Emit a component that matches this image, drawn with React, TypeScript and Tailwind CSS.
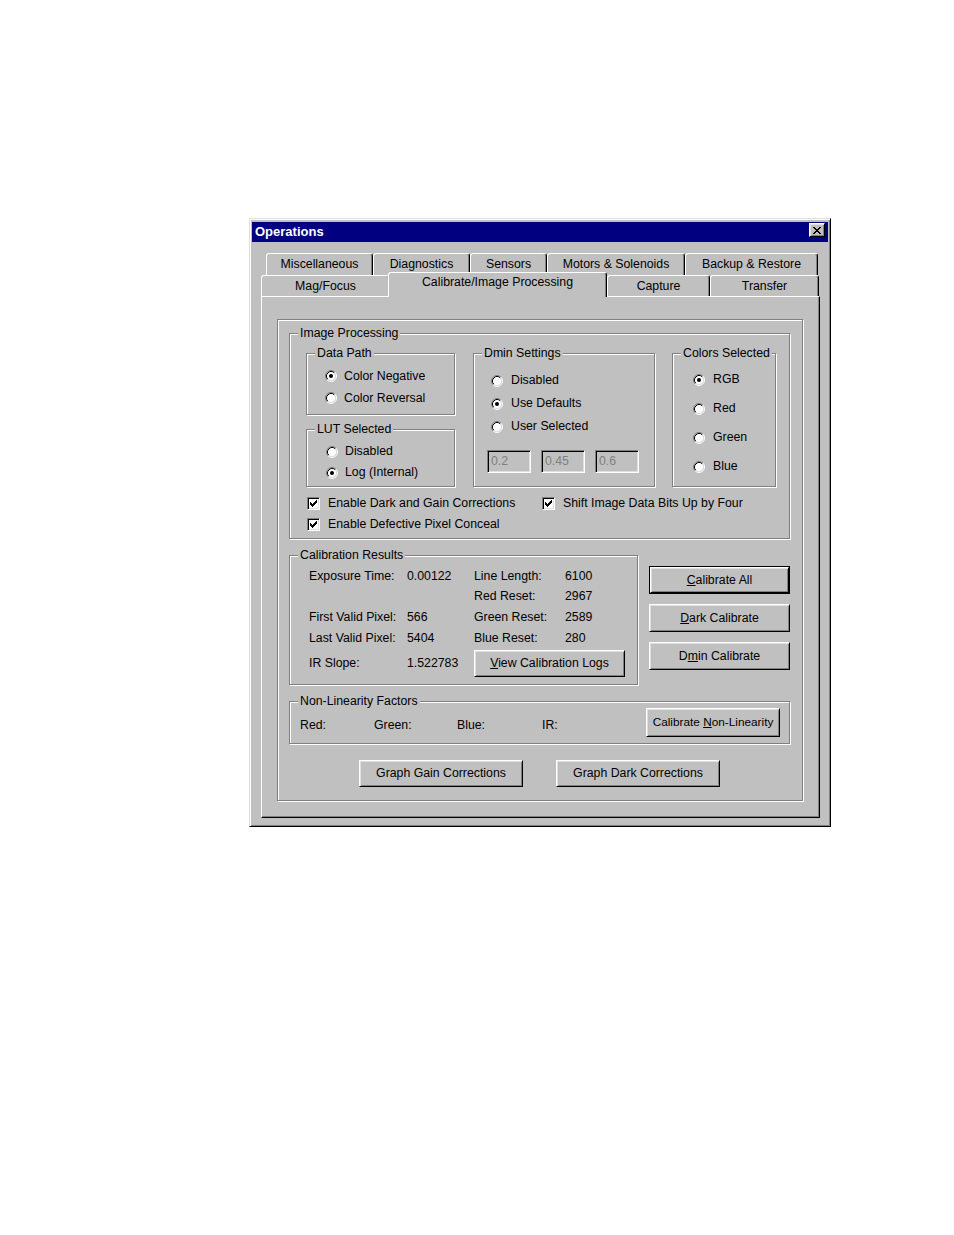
import React from "react";

const FONT = "font-['Liberation_Sans',Arial,sans-serif]";

// win95 bevels
const RAISED =
  "border border-t-white border-l-white border-r-black border-b-black shadow-[inset_1px_1px_0_#dfdfdf,inset_-1px_-1px_0_#808080]";
const SUNKEN =
  "border border-t-[#808080] border-l-[#808080] border-r-white border-b-white shadow-[inset_1px_1px_0_#000,inset_-1px_-1px_0_#dfdfdf]";
const ETCHED = "border border-[#808080] shadow-[inset_1px_1px_0_#fff,1px_1px_0_#fff]";

const TAB =
  "flex shrink-0 justify-center rounded-t-[3px] border-x border-t border-t-white border-l-white border-r-black shadow-[inset_-1px_0_0_#808080]";

const Group: React.FC<{ label: string; className?: string; children?: React.ReactNode }> = ({
  label,
  className,
  children,
}) => (
  <div className={`${ETCHED} shrink-0 ${className ?? ""}`}>
    <div className="-mt-[8px] ml-[8px] w-fit bg-[#c0c0c0] px-[2px] leading-[15px]">{label}</div>
    {children}
  </div>
);

const Radio: React.FC<{ label: string; checked?: boolean; row: string; gap?: string }> = ({
  label,
  checked,
  row,
  gap = "gap-[7px]",
}) => (
  <div className={`flex items-center ${row} ${gap}`}>
    <svg width="12" height="12" viewBox="0 0 12 12" className="shrink-0">
      <circle cx="6" cy="6" r="4.5" fill="#fff" />
      <path d="M2.11 9.89A5.5 5.5 0 0 1 9.89 2.11" fill="none" stroke="#808080" />
      <path d="M9.89 2.11A5.5 5.5 0 0 1 2.11 9.89" fill="none" stroke="#fff" />
      <path d="M2.82 9.18A4.5 4.5 0 0 1 9.18 2.82" fill="none" stroke="#000" />
      <path d="M9.18 2.82A4.5 4.5 0 0 1 2.82 9.18" fill="none" stroke="#dfdfdf" />
      {checked && <circle cx="6" cy="6" r="2" fill="#000" />}
    </svg>
    <span>{label}</span>
  </div>
);

const Check: React.FC<{ label: string }> = ({ label }) => (
  <div className="flex h-[21px] items-center gap-[8px]">
    <div className={`${SUNKEN} flex h-[13px] w-[13px] shrink-0 items-center justify-center bg-white`}>
      <svg width="7" height="7" viewBox="0 0 7 7" shapeRendering="crispEdges">
        <polygon
          fill="#000"
          points="0,2 1,2 1,3 2,3 2,4 3,4 3,3 4,3 4,2 5,2 5,1 6,1 6,0 7,0 7,3 6,3 6,4 5,4 5,5 4,5 4,6 3,6 3,7 2,7 2,6 1,6 1,5 0,5"
        />
      </svg>
    </div>
    <span>{label}</span>
  </div>
);

const Btn: React.FC<{ className: string; children: React.ReactNode; isDefault?: boolean }> = ({
  className,
  children,
  isDefault,
}) =>
  isDefault ? (
    <div className={`border border-black ${className}`}>
      <div className={`${RAISED} flex h-full w-full items-center justify-center`}>{children}</div>
    </div>
  ) : (
    <div className={`${RAISED} flex items-center justify-center ${className}`}>{children}</div>
  );

const Field: React.FC<{ value: string }> = ({ value }) => (
  <div className={`${SUNKEN} flex h-[23px] w-[44px] items-center pl-[3px] text-[#808080]`}>{value}</div>
);

const U: React.FC<{ children: React.ReactNode }> = ({ children }) => (
  <span className="underline underline-offset-1">{children}</span>
);

const backRow = [
  { label: "Miscellaneous", w: "w-[107px]" },
  { label: "Diagnostics", w: "w-[97px]" },
  { label: "Sensors", w: "w-[77px]" },
  { label: "Motors & Solenoids", w: "w-[138px]" },
  { label: "Backup & Restore", w: "w-[133px]" },
];

const results = [
  ["Exposure Time:", "0.00122", "Line Length:", "6100"],
  ["", "", "Red Reset:", "2967"],
  ["First Valid Pixel:", "566", "Green Reset:", "2589"],
  ["Last Valid Pixel:", "5404", "Blue Reset:", "280"],
];

export default function App() {
  return (
    <div className={`${FONT} min-h-screen bg-white pl-[249px] pt-[218px] text-[12.3px] leading-[15px] text-black`}>
      <div className="flex h-[609px] w-[582px] flex-col border border-t-[#dfdfdf] border-l-[#dfdfdf] border-r-black border-b-black bg-[#c0c0c0] px-[2px] pt-[3px] shadow-[inset_1px_1px_0_#fff,inset_-1px_-1px_0_#808080]">
        {/* title bar */}
        <div className="flex h-[20px] shrink-0 items-start justify-between bg-[#000080] pl-[3px] pr-[3px] pt-[1px]">
          <span className="text-[13px] font-bold leading-[17px] text-white">Operations</span>
          <div className={`${RAISED} flex h-[14px] w-[16px] items-center justify-center bg-[#c0c0c0]`}>
            <svg width="8" height="7" viewBox="0 0 8 7" shapeRendering="crispEdges">
              <path
                fill="#000"
                d="M0 0h2v1H0zM6 0h2v1H6zM1 1h2v1H1zM5 1h2v1H5zM2 2h4v1H2zM3 3h2v1H3zM2 4h4v1H2zM1 5h2v1H1zM5 5h2v1H5zM0 6h2v1H0zM6 6h2v1H6z"
              />
            </svg>
          </div>
        </div>

        {/* tab control */}
        <div className="ml-[9px] mt-[11px] w-[559px]">
          <div className="flex h-[22px] pl-[5px]">
            {backRow.map((t) => (
              <div key={t.label} className={`${TAB} h-[22px] items-center ${t.w}`}>
                {t.label}
              </div>
            ))}
          </div>
          <div className="flex h-[21px] items-end">
            <div className={`${TAB} h-[21px] w-[129px] items-center`}>Mag/Focus</div>
            <div className={`${TAB} relative z-10 -mb-px -ml-[2px] h-[25px] w-[219px] bg-[#c0c0c0] pt-[2px]`}>
              Calibrate/Image Processing
            </div>
            <div className={`${TAB} h-[21px] w-[103px] items-center`}>Capture</div>
            <div className={`${TAB} h-[21px] w-[109px] items-center`}>Transfer</div>
          </div>

          {/* page */}
          <div className="h-[522px] w-[559px] border border-t-white border-l-white border-r-black border-b-black pl-[15px] pt-[22px] shadow-[inset_-1px_-1px_0_#808080]">
            <div className={`${ETCHED} h-[482px] w-[526px] pl-[11px] pt-[13px]`}>
              {/* Image Processing */}
              <Group label="Image Processing" className="h-[206px] w-[501px]">
                <div className="flex pl-[16px] pt-[12px]">
                  <div className="flex flex-col gap-[14px]">
                    <Group label="Data Path" className="h-[62px] w-[149px]">
                      <div className="mt-[4px] pl-[18px]">
                        <Radio label="Color Negative" checked row="h-[22px]" />
                        <Radio label="Color Reversal" row="h-[22px]" />
                      </div>
                    </Group>
                    <Group label="LUT Selected" className="h-[58px] w-[149px]">
                      <div className="mt-[4px] pl-[19px]">
                        <Radio label="Disabled" row="h-[21px]" />
                        <Radio label="Log (Internal)" checked row="h-[21px]" />
                      </div>
                    </Group>
                  </div>
                  <Group label="Dmin Settings" className="ml-[18px] h-[134px] w-[182px]">
                    <div className="mt-[8px] pl-[17px]">
                      <Radio label="Disabled" row="h-[23px]" gap="gap-[8px]" />
                      <Radio label="Use Defaults" checked row="h-[23px]" gap="gap-[8px]" />
                      <Radio label="User Selected" row="h-[23px]" gap="gap-[8px]" />
                    </div>
                    <div className="ml-[13px] mt-[12px] flex gap-[10px]">
                      <Field value="0.2" />
                      <Field value="0.45" />
                      <Field value="0.6" />
                    </div>
                  </Group>
                  <Group label="Colors Selected" className="ml-[17px] h-[134px] w-[104px]">
                    <div className="mt-[4px] pl-[20px]">
                      <Radio label="RGB" checked row="h-[29px]" gap="gap-[8px]" />
                      <Radio label="Red" row="h-[29px]" gap="gap-[8px]" />
                      <Radio label="Green" row="h-[29px]" gap="gap-[8px]" />
                      <Radio label="Blue" row="h-[29px]" gap="gap-[8px]" />
                    </div>
                  </Group>
                </div>
                <div className="mt-[6px] grid grid-cols-[235px_1fr] pl-[17px]">
                  <Check label="Enable Dark and Gain Corrections" />
                  <Check label="Shift Image Data Bits Up by Four" />
                  <Check label="Enable Defective Pixel Conceal" />
                </div>
              </Group>

              {/* calibration results + buttons */}
              <div className="mt-[16px] flex">
                <Group label="Calibration Results" className="h-[130px] w-[349px]">
                  <div className="mt-[3px] grid grid-cols-[98px_67px_91px_auto] grid-rows-[20px_21px_21px_21px_29px] items-center pl-[19px]">
                    {results.flat().map((c, i) => (
                      <span key={i}>{c}</span>
                    ))}
                    <span>IR Slope:</span>
                    <span>1.522783</span>
                    <Btn className="col-span-2 h-[27px] w-[151px]">
                      <span>
                        <U>V</U>iew Calibration Logs
                      </span>
                    </Btn>
                  </div>
                </Group>
                <div className="ml-[11px] mt-[11px] flex flex-col gap-[10px]">
                  <Btn isDefault className="h-[28px] w-[141px]">
                    <span>
                      <U>C</U>alibrate All
                    </span>
                  </Btn>
                  <Btn className="h-[28px] w-[141px]">
                    <span>
                      <U>D</U>ark Calibrate
                    </span>
                  </Btn>
                  <Btn className="h-[28px] w-[141px]">
                    <span>
                      D<U>m</U>in Calibrate
                    </span>
                  </Btn>
                </div>
              </div>

              {/* non-linearity */}
              <Group label="Non-Linearity Factors" className="mt-[16px] h-[43px] w-[501px]">
                <div className="flex items-start pl-[10px]">
                  <span className="mt-[9px] w-[74px]">Red:</span>
                  <span className="mt-[9px] w-[83px]">Green:</span>
                  <span className="mt-[9px] w-[85px]">Blue:</span>
                  <span className="mt-[9px] w-[104px]">IR:</span>
                  <Btn className="-mt-px h-[29px] w-[134px] text-[11.8px]">
                    <span>
                      Calibrate <U>N</U>on-Linearity
                    </span>
                  </Btn>
                </div>
              </Group>

              <div className="mt-[16px] flex gap-[33px] pl-[70px]">
                <Btn className="h-[27px] w-[164px]">Graph Gain Corrections</Btn>
                <Btn className="h-[27px] w-[164px]">Graph Dark Corrections</Btn>
              </div>
            </div>
          </div>
        </div>
      </div>
    </div>
  );
}
